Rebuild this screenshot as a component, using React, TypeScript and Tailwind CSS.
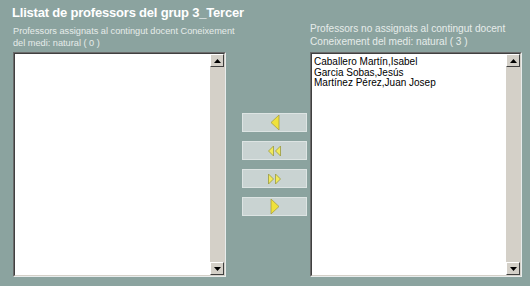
import React from "react";

const font = { fontFamily: '"Liberation Sans", Arial, sans-serif' };

function ScrollBtn({ up }: { up: boolean }) {
  return (
    <div className="w-[14px] h-[13px] bg-[#d4d0c8] border-t border-l border-t-white border-l-white border-b border-r border-b-[#404040] border-r-[#404040] flex items-center justify-center">
      <svg width="7" height="4" viewBox="0 0 7 4">
        {up ? <polygon points="3.5,0 7,4 0,4" fill="#000" /> : <polygon points="0,0 7,0 3.5,4" fill="#000" />}
      </svg>
    </div>
  );
}

function ListBox({ items }: { items: string[] }) {
  return (
    <div className="flex h-[225px] border-t border-l border-t-[#6b6b6b] border-l-[#6b6b6b] border-b border-r border-b-[#e8ecec] border-r-[#e8ecec]">
      <div className="flex flex-1 border-t border-l border-t-[#404040] border-l-[#404040] border-b border-r border-b-[#d4d0c8] border-r-[#d4d0c8]">
        <div className="flex-1 bg-white pl-[2px] pt-[3px] text-[10px] leading-[10.5px] text-black" style={font}>
          {items.map((t) => (
            <div key={t}>{t}</div>
          ))}
        </div>
        <div className="w-[14px] flex flex-col bg-[#d4d0c8]">
          <ScrollBtn up />
          <div className="flex-1 bg-[#d4d0c8]" />
          <ScrollBtn up={false} />
        </div>
      </div>
    </div>
  );
}

function Tri({ dir, double }: { dir: "l" | "r"; double?: boolean }) {
  if (double) {
    const pts =
      dir === "l"
        ? ["5,0 5,10 0,5", "12,0 12,10 7,5"]
        : ["0,0 0,10 5,5", "7,0 7,10 12,5"];
    return (
      <svg width="15" height="12" viewBox="-1 -1 14 12">
        {pts.map((p) => (
          <polygon key={p} points={p} fill="#f2ea5a" stroke="#9a9a40" strokeWidth="0.8" strokeLinejoin="round" />
        ))}
      </svg>
    );
  }
  const p = dir === "l" ? "8,0 8,15 0,7.5" : "0,0 0,15 8,7.5";
  return (
    <svg width="10" height="17" viewBox="-1 -1 10 17">
      <polygon points={p} fill="#efe13a" stroke="#a8a040" strokeWidth="0.8" strokeLinejoin="round" />
    </svg>
  );
}

function Btn({ children }: { children: React.ReactNode }) {
  return (
    <div className="w-[65px] h-[19px] bg-[#c9d3d2] border border-[#dde4e3] flex items-center justify-center">
      {children}
    </div>
  );
}

export default function App() {
  return (
    <div className="w-[530px] h-[286px] bg-[#8ba39f] overflow-hidden relative" style={font}>
      <div className="flex">
        <div className="w-[213px] ml-[13px] flex flex-col">
          <div className="pt-[4px] -ml-[1px] text-white font-bold text-[13px] tracking-[-0.2px] leading-[17px] whitespace-nowrap">
            Llistat de professors del grup 3_Tercer
          </div>
          <div className="mt-[4px] text-[9.2px] leading-[12px] text-[#e6ecea] whitespace-nowrap">
            Professors assignats al contingut docent Coneixement
            <br />
            del medi: natural ( 0 )
          </div>
          <div className="mt-[3px]">
            <ListBox items={[]} />
          </div>
        </div>
        <div className="w-[65px] ml-[16px] pt-[113px] flex flex-col gap-[9px]">
          <Btn>
            <Tri dir="l" />
          </Btn>
          <Btn>
            <Tri dir="l" double />
          </Btn>
          <Btn>
            <Tri dir="r" double />
          </Btn>
          <Btn>
            <Tri dir="r" />
          </Btn>
        </div>
        <div className="w-[212px] ml-[3px] flex flex-col">
          <div className="pt-[22px] text-[10.1px] leading-[13px] text-[#e6ecea] whitespace-nowrap">
            Professors no assignats al contingut docent
            <br />
            Coneixement del medi: natural ( 3 )
          </div>
          <div className="mt-[4px]">
            <ListBox items={["Caballero Martín,Isabel", "Garcia Sobas,Jesús", "Martínez Pérez,Juan Josep"]} />
          </div>
        </div>
      </div>
    </div>
  );
}
